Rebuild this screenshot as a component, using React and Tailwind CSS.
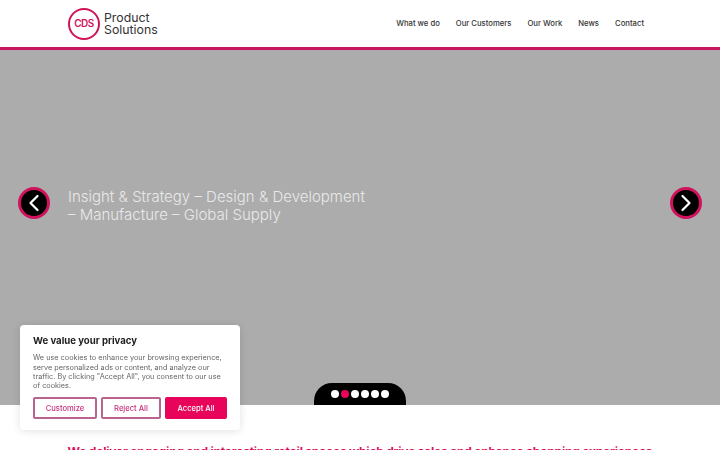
import { ChevronLeft, ChevronRight } from 'lucide-react';

const navItems = ['What we do', 'Our Customers', 'Our Work', 'News', 'Contact'];
const dots = [0, 1, 2, 3, 4, 5];

function Logo() {
  return (
    <div className="flex items-center gap-[4px]">
      <div className="flex h-[32px] w-[32px] items-center justify-center rounded-full border-2 border-[#d0145a] text-[10px] font-semibold tracking-[-0.6px] text-[#d0145a]">
        CDS
      </div>
      <div className="text-[12.3px] leading-[12px] text-[#333]">
        <div>Product</div>
        <div>Solutions</div>
      </div>
    </div>
  );
}

function Arrow({ side }) {
  const Icon = side === 'left' ? ChevronLeft : ChevronRight;
  const position = side === 'left' ? 'left-[18px]' : 'right-[18px]';
  return (
    <button
      type="button"
      className={`absolute top-[137px] flex h-8 w-8 items-center justify-center rounded-full border-[3px] border-[#d0125c] bg-black text-white ${position}`}
    >
      <Icon size={28} strokeWidth={1.9} className="shrink-0" />
    </button>
  );
}

export default function App() {
  return (
    <div className="h-screen overflow-hidden bg-white font-['Inter',sans-serif]">
      <header className="flex h-[50px] items-center justify-between border-b-[3px] border-[#c8155f] pl-[68px] pr-[76px]">
        <Logo />
        <nav className="flex gap-4 text-[7.7px] font-medium text-[#333]">
          {navItems.map((item) => (
            <a key={item} href="#">
              {item}
            </a>
          ))}
        </nav>
      </header>

      <section className="relative flex h-[355px] items-center bg-[#acacac] pb-[43px] pl-[68px]">
        <Arrow side="left" />
        <Arrow side="right" />
        <p className="w-[305px] text-[15px] leading-[18px] font-light text-[#e9e9e9]">
          Insight &amp; Strategy – Design &amp; Development – Manufacture – Global Supply
        </p>
        <div className="absolute bottom-0 left-[314px] flex h-[22px] w-[92px] items-center justify-center gap-[2px] rounded-t-[18px] bg-black">
          {dots.map((dot) => (
            <span
              key={dot}
              className={`h-2 w-2 rounded-full ${dot === 1 ? 'bg-[#e8045a]' : 'bg-white'}`}
            />
          ))}
        </div>
      </section>

      <h2 className="mt-[38px] text-center text-[12px] font-bold tracking-[-0.2px] whitespace-nowrap text-[#dc0f5c]">
        We deliver engaging and interesting retail spaces which drive sales and enhance shopping experiences
      </h2>

      <div className="fixed bottom-[20px] left-[20px] h-[105px] w-[220px] rounded bg-white px-[13px] pt-[9px] shadow-[0_1px_8px_rgba(0,0,0,0.12)]">
        <p className="text-[9.6px] font-bold text-[#212121]">We value your privacy</p>
        <p className="mt-[5px] w-[196px] text-[7.3px] leading-[9.2px] text-[#666]">
          We use cookies to enhance your browsing experience, serve personalized ads or content, and analyze our
          traffic. By clicking "Accept All", you consent to our use of cookies.
        </p>
        <div className="mt-[7px] flex gap-[4px] text-[7.6px] font-medium">
          <button type="button" className="h-[22px] w-[64px] rounded-[2px] border-2 border-[#b8648f] text-[#c8307a]">
            Customize
          </button>
          <button type="button" className="h-[22px] w-[60px] rounded-[2px] border-2 border-[#b8648f] text-[#c8307a]">
            Reject All
          </button>
          <button type="button" className="h-[22px] w-[62px] rounded-[2px] bg-[#e8045a] text-white">
            Accept All
          </button>
        </div>
      </div>
    </div>
  );
}
